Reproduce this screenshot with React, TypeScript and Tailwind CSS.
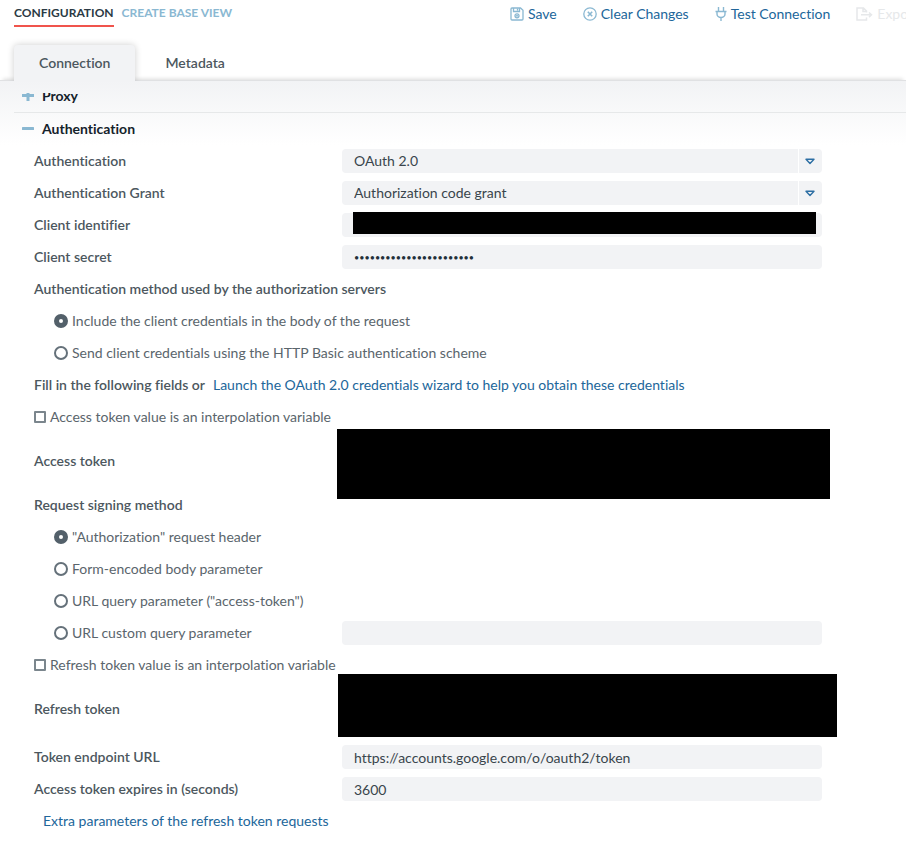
import React from 'react';

interface ToolButtonProps {
  icon: React.ReactNode;
  label: string;
  disabled?: boolean;
}

interface FieldRowProps {
  id: string;
  label: string;
  children: React.ReactNode;
}

interface ChoiceProps {
  name?: string;
  label: string;
  checked?: boolean;
}

const SaveIcon = () => (
  <svg width="14" height="14" viewBox="0 0 14 14" fill="none" stroke="currentColor" strokeWidth="1.3">
    <path d="M1 2a1 1 0 0 1 1-1h8.5L13 3.3V12a1 1 0 0 1-1 1H2a1 1 0 0 1-1-1z" />
    <path d="M3.5 1v3.5h6V1M7.5 1.5v2" />
    <circle cx="7" cy="8.8" r="2" />
    <circle cx="7" cy="8.8" r="0.4" />
  </svg>
);

const ClearIcon = () => (
  <svg width="14" height="14" viewBox="0 0 14 14" fill="none" stroke="currentColor" strokeWidth="1.3">
    <circle cx="7" cy="7" r="6.2" />
    <path d="M4.8 4.8l4.4 4.4M9.2 4.8L4.8 9.2" strokeWidth="1.6" />
  </svg>
);

const PlugIcon = () => (
  <svg width="12" height="14" viewBox="0 0 12 14" fill="none" stroke="currentColor" strokeWidth="1.4">
    <path d="M3.5 0v4M8.5 0v4M0.5 4.5h11M2 4.5v2.5a4 3.5 0 0 0 8 0V4.5M6 10.5V14" />
  </svg>
);

const ExportIcon = () => (
  <svg width="17" height="14" viewBox="0 0 17 14" fill="none" stroke="currentColor" strokeWidth="1.5">
    <path d="M10.5 5.5V4L7.5 1H1v12h9.5v-2.5M7 1v3.5h3.5" />
    <path d="M5 7.8h10.5M13 5.5l2.5 2.3L13 10.1" />
  </svg>
);

const ToolButton: React.FC<ToolButtonProps> = ({ icon, label, disabled }) => (
  <button
    type="button"
    disabled={disabled}
    className="flex shrink-0 items-center gap-1 whitespace-nowrap text-[#8ab8d2] disabled:text-[#e6e8ea]"
  >
    {icon}
    <span className={disabled ? 'text-[#e6e8ea]' : 'text-[#21669a]'}>{label}</span>
  </button>
);

const FieldRow: React.FC<FieldRowProps> = ({ id, label, children }) => (
  <div className="flex min-h-8 items-center">
    <label htmlFor={id} className="w-[308px] shrink-0 font-semibold">{label}</label>
    <div className="relative max-w-[480px] flex-1">{children}</div>
  </div>
);

const TextField: React.FC<{ id: string; value?: string; label?: string }> = ({ id, value = '', label }) => (
  <input
    id={id}
    type="text"
    defaultValue={value}
    aria-label={label}
    className="block h-6 w-full rounded bg-[#f2f3f5] px-3 text-[#39454c] outline-none"
  />
);

const SelectField: React.FC<{ id: string; value: string }> = ({ id, value }) => (
  <>
    <select id={id} className="block h-6 w-full appearance-none rounded bg-[#f2f3f5] px-3 text-[#39454c] outline-none">
      <option>{value}</option>
    </select>
    <span className="pointer-events-none absolute inset-y-0 right-0 flex w-6 items-center justify-center border-l border-white pr-0.5 text-[#2c6ea3]">
      <svg width="10" height="7" viewBox="0 0 10 7" fill="none" stroke="currentColor" strokeWidth="1.4">
        <path d="M1 1.2h8L5 5.5z" strokeLinejoin="round" />
      </svg>
    </span>
  </>
);

const RadioRow: React.FC<ChoiceProps & { children?: React.ReactNode }> = ({ name, label, checked, children }) => (
  <div className="flex h-8 items-center">
    <label className="flex w-[308px] shrink-0 items-center gap-1 whitespace-nowrap pl-5 text-[#5a656c]">
      <input
        type="radio"
        name={name}
        defaultChecked={checked}
        className="size-3.5 shrink-0 appearance-none rounded-full border-2 border-[#65717a] bg-white checked:border-[5px] checked:border-[#53606a]"
      />
      {label}
    </label>
    {children}
  </div>
);

const CheckRow: React.FC<ChoiceProps> = ({ label, checked }) => (
  <label className="flex h-8 items-center gap-1 text-[#5a656c]">
    <input
      type="checkbox"
      defaultChecked={checked}
      className="size-3 shrink-0 appearance-none rounded-[1px] border-2 border-[#7b868d] bg-white checked:bg-[#566169]"
    />
    {label}
  </label>
);

const App: React.FC = () => {
  return (
    <div className="min-h-screen overflow-hidden bg-white font-['Lato',sans-serif] text-sm leading-5 text-[#4c575e] [font-variant-ligatures:none]">
      <header className="flex h-7 items-start overflow-hidden pl-3.5">
        <nav className="flex w-[496px] shrink-0 gap-2 pt-1 text-xs font-bold">
          <a href="#configuration" className="border-b-2 border-[#f0544c] pb-[3px] leading-[18px] text-[#2b3a44]">CONFIGURATION</a>
          <a href="#base-view" className="pb-[3px] leading-[18px] text-[#8ab8d2]">CREATE BASE VIEW</a>
        </nav>
        <div className="flex shrink-0 gap-[26px] pt-1">
          <ToolButton icon={<SaveIcon />} label="Save" />
          <ToolButton icon={<ClearIcon />} label="Clear Changes" />
          <ToolButton icon={<PlugIcon />} label="Test Connection" />
          <ToolButton icon={<ExportIcon />} label="Export" disabled />
        </div>
      </header>

      <div role="tablist" className="relative z-10 -mb-px flex h-[53px] items-end gap-1 pl-3.5 font-semibold">
        <button
          type="button"
          role="tab"
          aria-selected="true"
          className="h-9 rounded-t bg-[#f2f3f5] px-[25px] shadow-[0_0_7px_rgba(0,0,0,0.2)] [clip-path:inset(-8px_-8px_0)]"
        >
          Connection
        </button>
        <button type="button" role="tab" aria-selected="false" className="h-9 px-[26px]">Metadata</button>
      </div>

      <main className="border-t border-[#e0e1e3] bg-linear-to-b from-[#f2f3f5] to-white to-[64px] pt-3 shadow-[0_-4px_4px_-3px_rgba(0,0,0,0.15)]">
        <div className="overflow-hidden pl-3.5">
          <h2 className="-mt-3.5 h-[34px] border-b border-[#e6e8e9] text-[#14222b]">
            <button type="button" className="flex h-full items-center gap-2 pl-2 font-bold">
              <svg width="12" height="12" viewBox="0 0 12 12" fill="#8ab8d2">
                <path d="M0 4h4.500V0h3v4H12v3H7.500v4h-3V7H0z" />
              </svg>
              Proxy
            </button>
          </h2>
          <h2 className="h-8 text-[#14222b]">
            <button type="button" className="flex h-full items-center gap-2 pl-2 font-bold">
              <svg width="12" height="12" viewBox="0 0 12 12" fill="#8ab8d2">
                <rect y="4" width="12" height="3" rx="0.5" />
              </svg>
              Authentication
            </button>
          </h2>

          <form className="pl-5">
            <FieldRow id="auth" label="Authentication">
              <SelectField id="auth" value="OAuth 2.0" />
            </FieldRow>
            <FieldRow id="grant" label="Authentication Grant">
              <SelectField id="grant" value="Authorization code grant" />
            </FieldRow>
            <FieldRow id="client-id" label="Client identifier">
              <TextField id="client-id" />
              <div className="absolute -top-px right-1.5 bottom-[3px] left-[11px] bg-black" />
            </FieldRow>
            <FieldRow id="client-secret" label="Client secret">
              <input
                id="client-secret"
                type="password"
                defaultValue="abcdefghijklmnopqrstuvw"
                className="block h-6 w-full rounded bg-[#f2f3f5] px-3 text-[9px] text-[#22303a] outline-none"
              />
            </FieldRow>

            <fieldset>
              <legend className="h-8 font-semibold leading-8">Authentication method used by the authorization servers</legend>
              <RadioRow name="method" label="Include the client credentials in the body of the request" checked />
              <RadioRow name="method" label="Send client credentials using the HTTP Basic authentication scheme" />
            </fieldset>

            <p className="flex h-8 items-center gap-2 whitespace-nowrap">
              <span className="font-semibold">Fill in the following fields or</span>
              <a href="#wizard" className="text-[#21669a]">Launch the OAuth 2.0 credentials wizard to help you obtain these credentials</a>
            </p>

            <CheckRow label="Access token value is an interpolation variable" />
            <FieldRow id="access-token" label="Access token">
              <textarea id="access-token" className="block h-14 w-full resize-none rounded bg-[#f2f3f5]" />
              <div className="absolute -top-1 -right-2 -bottom-2.5 -left-[5px] bg-black" />
            </FieldRow>

            <fieldset>
              <legend className="h-8 font-semibold leading-8">Request signing method</legend>
              <RadioRow name="signing" label={'"Authorization" request header'} checked />
              <RadioRow name="signing" label="Form-encoded body parameter" />
              <RadioRow name="signing" label={'URL query parameter ("access-token")'} />
              <RadioRow name="signing" label="URL custom query parameter">
                <div className="max-w-[480px] flex-1">
                  <TextField id="custom-parameter" label="Custom query parameter" />
                </div>
              </RadioRow>
            </fieldset>

            <CheckRow label="Refresh token value is an interpolation variable" />
            <div className="mb-1">
              <FieldRow id="refresh-token" label="Refresh token">
                <textarea id="refresh-token" className="block h-14 w-full resize-none rounded bg-[#f2f3f5]" />
                <div className="absolute -top-[7px] -right-[15px] bottom-0 -left-1 bg-black" />
              </FieldRow>
            </div>
            <FieldRow id="endpoint" label="Token endpoint URL">
              <TextField id="endpoint" value="https://accounts.google.com/o/oauth2/token" />
            </FieldRow>
            <FieldRow id="expires" label="Access token expires in (seconds)">
              <TextField id="expires" value="3600" />
            </FieldRow>
            <a href="#extra" className="flex h-8 items-center pl-[9px] text-[#21669a]">Extra parameters of the refresh token requests</a>
          </form>
        </div>
      </main>
    </div>
  );
};

export default App;
